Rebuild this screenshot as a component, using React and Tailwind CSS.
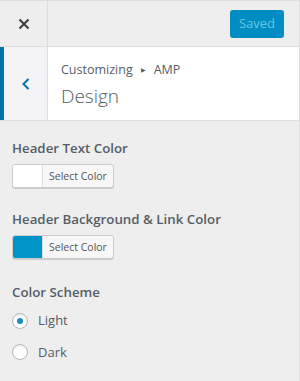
import React from "react";

function ColorButton({ swatch }) {
  return (
    <button className="flex h-6 items-stretch overflow-hidden rounded-[3px] border border-[#ccc] bg-[#f7f7f7] shadow-[0_1px_0_#ccc]">
      <span className={`w-[30px] border-r border-[#ddd] ${swatch}`} />
      <span className="flex items-center px-[6px] text-[10.5px] leading-none text-[#555]">
        Select Color
      </span>
    </button>
  );
}

function Radio({ label, checked }) {
  return (
    <label className="flex items-center gap-[10px] text-[13px] text-[#555d66]">
      <span className="flex h-4 w-4 items-center justify-center rounded-full border border-[#b4b9be] bg-white shadow-[inset_0_1px_2px_rgba(0,0,0,0.1)]">
        {checked && <span className="h-[6px] w-[6px] rounded-full bg-[#1e8cbe]" />}
      </span>
      {label}
    </label>
  );
}

export default function App() {
  return (
    <div
      className="flex h-[381px] w-[300px] flex-col border-t border-r border-[#ddd] bg-[#eee]"
      style={{ fontFamily: '"Open Sans", "Noto Sans", sans-serif' }}
    >
      <div className="flex h-[46px] items-center justify-between border-b border-[#ddd]">
        <div className="flex h-full w-[48px] items-center justify-center border-r border-[#ddd]">
          <svg width="12" height="12" viewBox="0 0 12 12">
            <path d="M1.5 1.5 L10.5 10.5 M10.5 1.5 L1.5 10.5" stroke="#444" strokeWidth="2.2" />
          </svg>
        </div>
        <button className="mr-[15px] h-[28px] rounded-[3px] bg-[#008ec2] px-[9px] text-[13px] text-[#66c6e4]">
          Saved
        </button>
      </div>

      <div className="flex h-[74px] border-b border-[#ddd] bg-white">
        <div className="flex w-[48px] items-center justify-center border-l-4 border-r border-l-[#0073aa] border-r-[#ddd] bg-[#f3f3f5]">
          <svg width="10" height="14" viewBox="0 0 10 14">
            <path d="M7.5 2 L2.5 7 L7.5 12" fill="none" stroke="#0073aa" strokeWidth="2" />
          </svg>
        </div>
        <div className="flex flex-col justify-center pl-[13px] pt-[2px] text-[#555d66]">
          <div className="flex items-center text-[12.5px] leading-[18px]">
            Customizing
            <span className="mx-[8px] text-[6px]">▶</span>
            AMP
          </div>
          <div className="mt-[4px] text-[19px] font-light leading-[26px]">Design</div>
        </div>
      </div>

      <div className="flex flex-col px-3 pt-[17px] text-[#555d66]">
        <div className="text-[13.3px] font-semibold leading-[20px]">Header Text Color</div>
        <div className="mt-[6px]">
          <ColorButton swatch="bg-white" />
        </div>
        <div className="mt-[21px] text-[13.3px] font-semibold leading-[20px]">
          Header Background &amp; Link Color
        </div>
        <div className="mt-[6px]">
          <ColorButton swatch="bg-[#0095c8]" />
        </div>
        <div className="mt-[23px] text-[13.3px] font-semibold leading-[20px]">Color Scheme</div>
        <div className="mt-[9px] flex flex-col gap-[12px]">
          <Radio label="Light" checked />
          <Radio label="Dark" />
        </div>
      </div>
    </div>
  );
}
